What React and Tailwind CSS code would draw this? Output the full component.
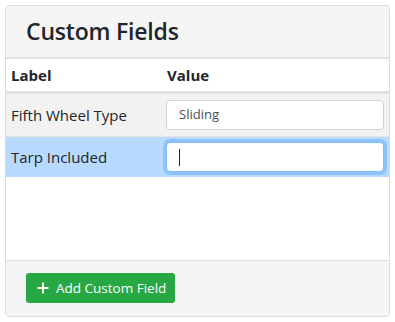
import { Plus } from 'lucide-react';

const rows = [
  { label: 'Fifth Wheel Type', value: 'Sliding', active: false },
  { label: 'Tarp Included', value: '', active: true },
];

export default function App() {
  return (
    <div className="w-[395px] h-[322px] bg-white p-[5px] text-[#212529] font-['Open_Sans',sans-serif]">
      <div className="h-[312px] border border-[#dcdcdc] rounded-[4px] flex flex-col overflow-hidden">
        {/* HEADER */}
        <div className="h-[53px] bg-[#f5f5f5] border-b-2 border-[#e2e2e2] pl-5 flex items-center">
          <h4 className="text-[23px] font-semibold tracking-[-0.2px]">Custom Fields</h4>
        </div>

        {/* TABLE */}
        <div className="flex-1 bg-white">
          <div className="flex h-[34px] items-center border-b-2 border-[#dee2e6] text-[15px] font-bold">
            <div className="w-[160px] pl-[5px]">Label</div>
            <div className="pl-[1px]">Value</div>
          </div>

          {rows.map(r => (
            <div
              key={r.label}
              className={`flex items-center ${r.active ? 'h-[41px] bg-[#b8daff]' : 'h-[43px] bg-[#f2f2f2]'} border-t border-[#e4e4e4]`}
            >
              <div className="w-[160px] pl-[5px] text-[15px]">{r.label}</div>
              <div className="flex-1 pr-[5px]">
                <div
                  className={`h-[30px] bg-white rounded-[4px] flex items-center px-3 text-[13px] text-[#495057] ${
                    r.active
                      ? 'border border-[#80bdff] ring-[3px] ring-[#8ec3fb]'
                      : 'border border-[#ced4da]'
                  }`}
                >
                  {r.active ? <span className="w-px h-[17px] bg-[#222]" /> : r.value}
                </div>
              </div>
            </div>
          ))}
        </div>

        {/* FOOTER */}
        <div className="h-[56px] bg-[#f5f5f5] border-t border-[#dcdcdc] pl-5 pt-3">
          <button className="h-[30px] px-[9px] bg-[#28a745] text-white rounded-[3px] flex items-center gap-[5px] text-[13.5px]">
            <Plus size={16} strokeWidth={3} />
            Add Custom Field
          </button>
        </div>
      </div>
    </div>
  );
}
